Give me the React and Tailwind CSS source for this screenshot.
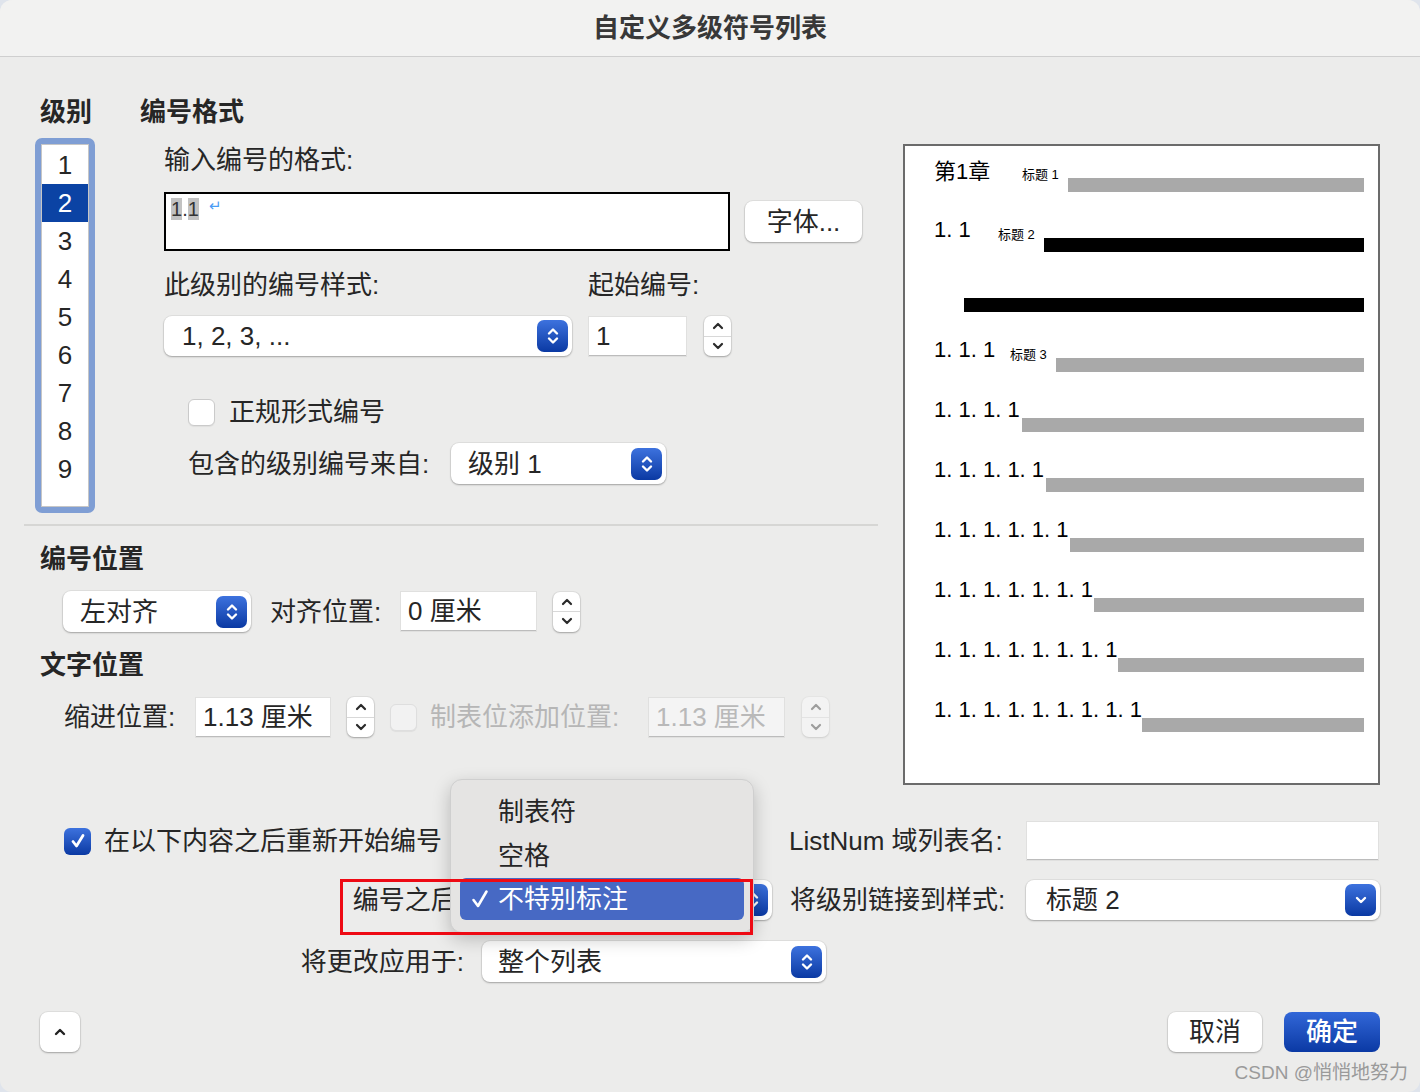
import React from "react";

const selectShadow = "shadow-[0_1px_2px_rgba(0,0,0,0.28),0_0_0_1px_rgba(0,0,0,0.05)]";

const UpDownIcon = () => (
    <svg width="14" height="22" viewBox="0 0 14 22" fill="none" stroke="white" strokeWidth="2.4" strokeLinecap="round" strokeLinejoin="round">
        <path d="M3 8.5 L7 4.5 L11 8.5" />
        <path d="M3 13.5 L7 17.5 L11 13.5" />
    </svg>
);

const BlueButton = ({ down }) => (
    <div className="w-[31px] h-[32px] rounded-[7px] bg-linear-to-b from-[#3d72de] to-[#0a39a3] flex items-center justify-center shrink-0">
        {down ? (
            <svg width="14" height="10" viewBox="0 0 14 10" fill="none" stroke="white" strokeWidth="2.4" strokeLinecap="round" strokeLinejoin="round">
                <path d="M3 3 L7 7 L11 3" />
            </svg>
        ) : (
            <UpDownIcon />
        )}
    </div>
);

const Select = ({ text, className, down, pl = "pl-[18px]" }) => (
    <div className={`flex items-center justify-between bg-white rounded-[8px] ${selectShadow} pr-[4px] ${pl} ${className}`}>
        <span className="text-[26px] leading-[32px] whitespace-nowrap">{text}</span>
        <BlueButton down={down} />
    </div>
);

const Stepper = ({ disabled }) => (
    <div className={`flex flex-col w-[27px] h-[40px] rounded-[7px] bg-white shrink-0 ${selectShadow} ${disabled ? "opacity-40" : ""}`}>
        <div className="flex-1 flex items-center justify-center border-b border-[#d8d8d8]">
            <svg width="14" height="9" viewBox="0 0 14 9" fill="none" stroke="#2a2a2a" strokeWidth="2.2" strokeLinecap="round" strokeLinejoin="round">
                <path d="M3 7 L7 3 L11 7" />
            </svg>
        </div>
        <div className="flex-1 flex items-center justify-center">
            <svg width="14" height="9" viewBox="0 0 14 9" fill="none" stroke="#2a2a2a" strokeWidth="2.2" strokeLinecap="round" strokeLinejoin="round">
                <path d="M3 2 L7 6 L11 2" />
            </svg>
        </div>
    </div>
);

const Field = ({ text, className, disabled }) => (
    <div className={`flex items-center border-b border-[#bcbcbc] shadow-[0_0_0_1px_rgba(0,0,0,0.05)] pl-[7px] ${disabled ? "bg-[#f4f4f4] text-[#b9b9b9]" : "bg-white"} ${className}`}>
        <span className="text-[26px] leading-[32px] whitespace-nowrap">{text}</span>
    </div>
);

const CheckBox = ({ checked, disabled }) => checked ? (
    <div className="w-[27px] h-[27px] rounded-[6px] bg-linear-to-b from-[#3d72de] to-[#0a39a3] flex items-center justify-center shrink-0">
        <svg width="18" height="18" viewBox="0 0 18 18" fill="none" stroke="white" strokeWidth="2.8" strokeLinecap="round" strokeLinejoin="round">
            <path d="M4 9.5 L7.5 14 L14 3.5" />
        </svg>
    </div>
) : (
    <div className={`w-[27px] h-[27px] rounded-[6px] border shrink-0 shadow-[0_1px_1px_rgba(0,0,0,0.06)] ${disabled ? "bg-[#f2f2f2] border-[#dedede]" : "bg-white border-[#cacaca]"}`} />
);

const Label = ({ children, className = "" }) => (
    <span className={`text-[26px] leading-[32px] whitespace-nowrap ${className}`}>{children}</span>
);

const Heading = ({ children, className = "" }) => (
    <div className={`h-[32px] text-[26px] leading-[32px] font-semibold whitespace-nowrap ${className}`}>{children}</div>
);

const Bar = ({ black, className = "" }) => (
    <div className={`flex-1 h-[14px] ${black ? "bg-black" : "bg-[#a9a9a9]"} ${className}`} />
);

const Digits = ({ text, w }) => (
    <div className="h-[60px] flex items-end">
        <span className={`${w} text-[22px] leading-[22px] mb-[11px] whitespace-nowrap`}>{text}</span>
        <Bar />
    </div>
);

const Preview = () => (
    <div className="w-[477px] h-[641px] mt-[48px] ml-[25px] border-2 border-[#6b6b6b] bg-white pl-[29px] pr-[14px] text-black shrink-0">
        <div className="h-[46px] flex items-end">
            <span className="w-[88px] text-[22px] leading-[22px] mb-[9px] whitespace-nowrap">第1章</span>
            <span className="w-[46px] text-[13px] leading-[13px] mb-[11px] whitespace-nowrap">标题 1</span>
            <Bar />
        </div>
        <div className="h-[60px] flex items-end">
            <span className="w-[64px] text-[22px] leading-[22px] mb-[11px] whitespace-nowrap">1. 1</span>
            <span className="w-[46px] text-[13px] leading-[13px] mb-[11px] whitespace-nowrap">标题 2</span>
            <Bar black />
        </div>
        <div className="h-[60px] flex items-end">
            <Bar black className="ml-[30px]" />
        </div>
        <div className="h-[60px] flex items-end">
            <span className="w-[76px] text-[22px] leading-[22px] mb-[11px] whitespace-nowrap">1. 1. 1</span>
            <span className="w-[46px] text-[13px] leading-[13px] mb-[11px] whitespace-nowrap">标题 3</span>
            <Bar />
        </div>
        <Digits text="1. 1. 1. 1" w="w-[88px]" />
        <Digits text="1. 1. 1. 1. 1" w="w-[112px]" />
        <Digits text="1. 1. 1. 1. 1. 1" w="w-[136px]" />
        <Digits text="1. 1. 1. 1. 1. 1. 1" w="w-[160px]" />
        <Digits text="1. 1. 1. 1. 1. 1. 1. 1" w="w-[184px]" />
        <Digits text="1. 1. 1. 1. 1. 1. 1. 1. 1" w="w-[208px]" />
    </div>
);

const LevelList = () => (
    <div className="w-[60px] h-[375px] ml-[11px] rounded-[7px] bg-[#7f9ed4] p-[6px] shrink-0">
        <div className="h-full bg-white border border-[#c6c6c6] pt-[1px]">
            {["1", "2", "3", "4", "5", "6", "7", "8", "9"].map((n) => (
                <div
                    key={n}
                    className={`h-[38px] flex items-center justify-center text-[26px] ${n === "2" ? "bg-[#0b43a4] text-white" : ""}`}
                >
                    {n}
                </div>
            ))}
        </div>
    </div>
);

export default function App() {
    return (
        <div className="w-[1420px] h-[1092px] bg-[#dfe4ec] font-['Liberation_Sans','Noto_Sans_CJK_SC',sans-serif] text-[#262626]">
            <div className="relative w-full h-full rounded-[12px] bg-[#ececeb] overflow-hidden flex flex-col">
                {/* title bar */}
                <div className="h-[57px] shrink-0 bg-[#f2f2f1] border-b border-[#cfcfcf] flex items-center justify-center text-[26px] font-semibold text-[#383838]">
                    自定义多级符号列表
                </div>

                <div className="flex flex-col pl-[24px] pr-[40px]">
                    {/* top section */}
                    <div className="flex items-start mt-[39px]">
                        <div className="w-[854px] flex flex-col shrink-0">
                            <div className="flex">
                                <Heading className="w-[116px] pl-[16px]">级别</Heading>
                                <Heading>编号格式</Heading>
                            </div>
                            <div className="flex items-start mt-[10px]">
                                <LevelList />
                                <div className="flex flex-col ml-[69px]">
                                    <Label className="mt-[6px]">输入编号的格式:</Label>
                                    <div className="flex items-start mt-[16px]">
                                        <div className="w-[566px] h-[59px] border-2 border-black bg-white pl-[5px] pt-[1px] flex items-start">
                                            <span className="text-[20px] leading-[28px] text-[#333]">
                                                <span className="bg-[#c2c2c2]">1</span>.<span className="bg-[#c2c2c2]">1</span>
                                            </span>
                                            <span className="ml-[10px] text-[15px] leading-[22px] text-[#4a9cf5]">↵</span>
                                        </div>
                                        <div className={`ml-[15px] mt-[9px] w-[117px] h-[41px] rounded-[8px] bg-white ${selectShadow} flex items-center justify-center`}>
                                            <Label>字体...</Label>
                                        </div>
                                    </div>
                                    <div className="flex mt-[18px]">
                                        <Label className="w-[424px]">此级别的编号样式:</Label>
                                        <Label>起始编号:</Label>
                                    </div>
                                    <div className="flex items-start mt-[15px]">
                                        <Select text="1, 2, 3, ..." className="w-[408px] h-[40px]" />
                                        <Field text="1" className="ml-[17px] mt-[1px] w-[97px] h-[39px]" />
                                        <div className="ml-[18px]">
                                            <Stepper />
                                        </div>
                                    </div>
                                    <div className="flex items-center h-[28px] mt-[42px] ml-[24px]">
                                        <CheckBox />
                                        <Label className="ml-[14px]">正规形式编号</Label>
                                    </div>
                                    <div className="flex items-center h-[41px] mt-[17px] ml-[24px]">
                                        <Label className="w-[263px]">包含的级别编号来自:</Label>
                                        <Select text="级别 1" className="w-[215px] h-[41px]" pl="pl-[17px]" />
                                    </div>
                                </div>
                            </div>

                            <div className="h-[2px] bg-[#d6d6d4] mt-[11px]" />

                            <Heading className="mt-[17px] pl-[16px]">编号位置</Heading>
                            <div className="flex items-center h-[41px] mt-[16px] pl-[39px]">
                                <Select text="左对齐" className="w-[188px] h-[41px]" pl="pl-[17px]" />
                                <Label className="ml-[19px] w-[131px]">对齐位置:</Label>
                                <Field text="0 厘米" className="w-[135px] h-[39px]" />
                                <div className="ml-[17px]">
                                    <Stepper />
                                </div>
                            </div>

                            <Heading className="mt-[17px] pl-[16px]">文字位置</Heading>
                            <div className="flex items-center h-[40px] mt-[16px] pl-[40px]">
                                <Label className="w-[132px]">缩进位置:</Label>
                                <Field text="1.13 厘米" className="w-[134px] h-[39px]" />
                                <div className="ml-[17px]">
                                    <Stepper />
                                </div>
                                <div className="ml-[16px]">
                                    <CheckBox disabled />
                                </div>
                                <Label className="ml-[13px] w-[219px] text-[#b6b6b6]">制表位添加位置:</Label>
                                <Field text="1.13 厘米" disabled className="w-[135px] h-[39px]" />
                                <div className="ml-[18px]">
                                    <Stepper disabled />
                                </div>
                            </div>
                        </div>
                        <Preview />
                    </div>

                    {/* bottom section */}
                    <div className="flex items-center h-[40px] mt-[36px]">
                        <div className="w-[765px] flex items-center pl-[40px] shrink-0">
                            <CheckBox checked />
                            <Label className="ml-[13px]">在以下内容之后重新开始编号</Label>
                        </div>
                        <Label className="w-[238px]">ListNum 域列表名:</Label>
                        <div className="w-[351px] h-[38px] bg-white border-b border-[#bcbcbc] shadow-[0_0_0_1px_rgba(0,0,0,0.05)]" />
                    </div>

                    <div className="flex items-center h-[40px] mt-[19px]">
                        <div className="w-[766px] flex items-center shrink-0">
                            <Label className="w-[440px] text-right">编号之后:</Label>
                            <Select text="不特别标注" className="ml-[18px] w-[290px] h-[40px]" pl="pl-[16px]" />
                        </div>
                        <Label className="w-[236px]">将级别链接到样式:</Label>
                        <Select text="标题 2" down className="w-[354px] h-[40px]" pl="pl-[20px]" />
                    </div>

                    <div className="flex items-center h-[41px] mt-[21px]">
                        <Label className="w-[440px] text-right">将更改应用于:</Label>
                        <Select text="整个列表" className="ml-[18px] w-[344px] h-[41px]" pl="pl-[16px]" />
                    </div>

                    {/* footer */}
                    <div className="flex items-center h-[40px] mt-[30px]">
                        <div className={`ml-[16px] w-[40px] h-[40px] rounded-[8px] bg-white ${selectShadow} flex items-center justify-center`}>
                            <svg width="14" height="10" viewBox="0 0 14 10" fill="none" stroke="#222" strokeWidth="2.4" strokeLinecap="round" strokeLinejoin="round">
                                <path d="M3 7 L7 3 L11 7" />
                            </svg>
                        </div>
                        <div className="flex-1" />
                        <div className={`w-[94px] h-[40px] rounded-[8px] bg-white ${selectShadow} flex items-center justify-center`}>
                            <Label>取消</Label>
                        </div>
                        <div className="ml-[22px] w-[96px] h-[40px] rounded-[8px] bg-linear-to-b from-[#3267d8] to-[#0a39a4] flex items-center justify-center text-white">
                            <Label className="font-medium">确定</Label>
                        </div>
                    </div>
                </div>

                {/* popup menu */}
                <div className="absolute left-[450px] top-[779px] w-[304px] h-[154px] rounded-[12px] bg-[#e5e4e3] border border-[#cfcfcf] shadow-[0_6px_18px_rgba(0,0,0,0.22)] pt-[10px] px-[9px]">
                    <div className="h-[44px] flex items-center pl-[38px]">
                        <Label>制表符</Label>
                    </div>
                    <div className="h-[44px] flex items-center pl-[38px]">
                        <Label>空格</Label>
                    </div>
                    <div className="h-[42px] rounded-[6px] bg-[#4769c4] flex items-center text-white">
                        <svg className="ml-[11px]" width="18" height="20" viewBox="0 0 18 20" fill="none" stroke="white" strokeWidth="2.6" strokeLinecap="round" strokeLinejoin="round">
                            <path d="M2.5 11 L7 17 L15.5 2.5" />
                        </svg>
                        <Label className="ml-[9px]">不特别标注</Label>
                    </div>
                </div>

                {/* red highlight */}
                <div className="absolute left-[340px] top-[879px] w-[413px] h-[56px] border-[3px] border-[#ee0a14]" />

                {/* watermark */}
                <div className="absolute right-[12px] bottom-[7px] text-[19px] leading-[24px] text-[#9a9a9a] whitespace-nowrap">
                    CSDN @悄悄地努力
                </div>
            </div>
        </div>
    );
}
